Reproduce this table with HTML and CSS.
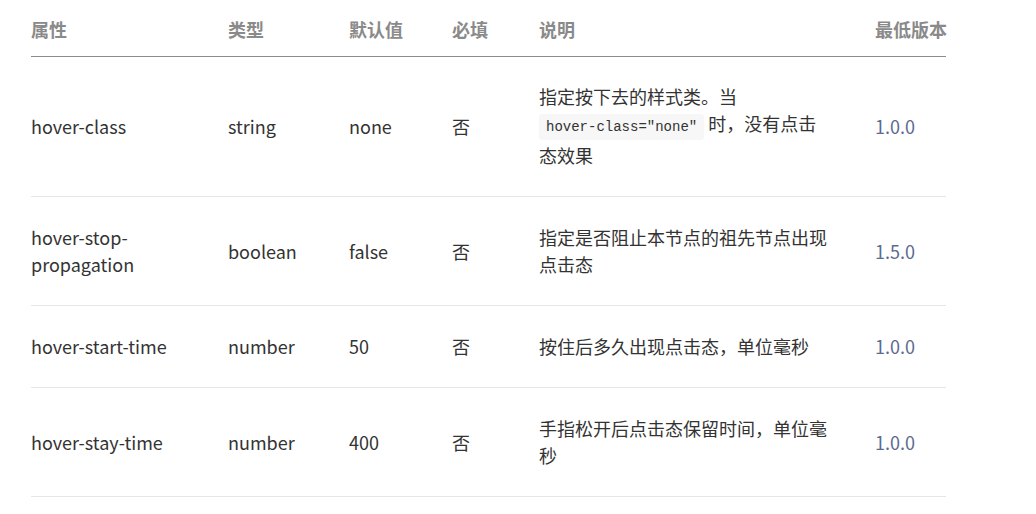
FILE: index.html
```html
<!DOCTYPE html>
<html lang="zh">
<head>
<meta charset="utf-8">
<link rel="stylesheet" href="styles.css">
</head>
<body>
<table class="props">
  <colgroup>
    <col class="c-name"><col class="c-type"><col class="c-def"><col class="c-req"><col class="c-desc"><col class="c-ver">
  </colgroup>
  <thead>
    <tr><th>属性</th><th>类型</th><th>默认值</th><th>必填</th><th class="desc">说明</th><th class="ver">最低版本</th></tr>
  </thead>
  <tbody>
    <tr class="tall">
      <td>hover-class</td><td>string</td><td>none</td><td>否</td>
      <td class="desc">指定按下去的样式类。当 <code>hover-class="none"</code> 时，没有点击态效果</td>
      <td class="ver">1.0.0</td>
    </tr>
    <tr>
      <td>hover-stop-propagation</td><td>boolean</td><td>false</td><td>否</td>
      <td class="desc">指定是否阻止本节点的祖先节点出现点击态</td>
      <td class="ver">1.5.0</td>
    </tr>
    <tr>
      <td>hover-start-time</td><td>number</td><td>50</td><td>否</td>
      <td class="desc">按住后多久出现点击态，单位毫秒</td>
      <td class="ver">1.0.0</td>
    </tr>
    <tr>
      <td>hover-stay-time</td><td>number</td><td>400</td><td>否</td>
      <td class="desc">手指松开后点击态保留时间，单位毫秒</td>
      <td class="ver">1.0.0</td>
    </tr>
  </tbody>
</table>
</body>
</html>
```
FILE: styles.css
```css
html, body {
  margin: 0;
  padding: 0;
  background: #fff;
}
body {
  font-family: "Noto Sans CJK SC", "Noto Sans", sans-serif;
  font-size: 18px;
  color: #333;
}
.props {
  margin-left: 31px;
  width: 915px;
  table-layout: fixed;
  border-collapse: collapse;
}
.c-name { width: 197px; }
.c-type { width: 121px; }
.c-def { width: 103px; }
.c-req { width: 87px; }
.c-desc { width: 336px; }
.c-ver { width: 71px; }
th, td {
  text-align: left;
  padding: 0 8px 0 0;
  line-height: 27px;
  vertical-align: middle;
}
th {
  font-weight: bold;
  color: #8a8a8a;
  padding-top: 16px;
  padding-bottom: 13px;
  border-bottom: 1px solid #8c8c8c;
  white-space: nowrap;
}
td {
  padding-top: 27px;
  padding-bottom: 27px;
  border-bottom: 1px solid #e6e6e6;
}
td.desc, th.desc { padding-right: 45px; }
td.ver, th.ver { padding-right: 0; white-space: nowrap; }
td.ver { color: #5c6b8f; }
.tall td { padding-top: 26px; padding-bottom: 27px; }
code {
  font-family: "Liberation Mono", "DejaVu Sans Mono", monospace;
  font-size: 14px;
  white-space: nowrap;
  background: #f7f7f7;
  border-radius: 3px;
  padding: 5px 7px;
  line-height: 29px;
  color: #333;
}
```
